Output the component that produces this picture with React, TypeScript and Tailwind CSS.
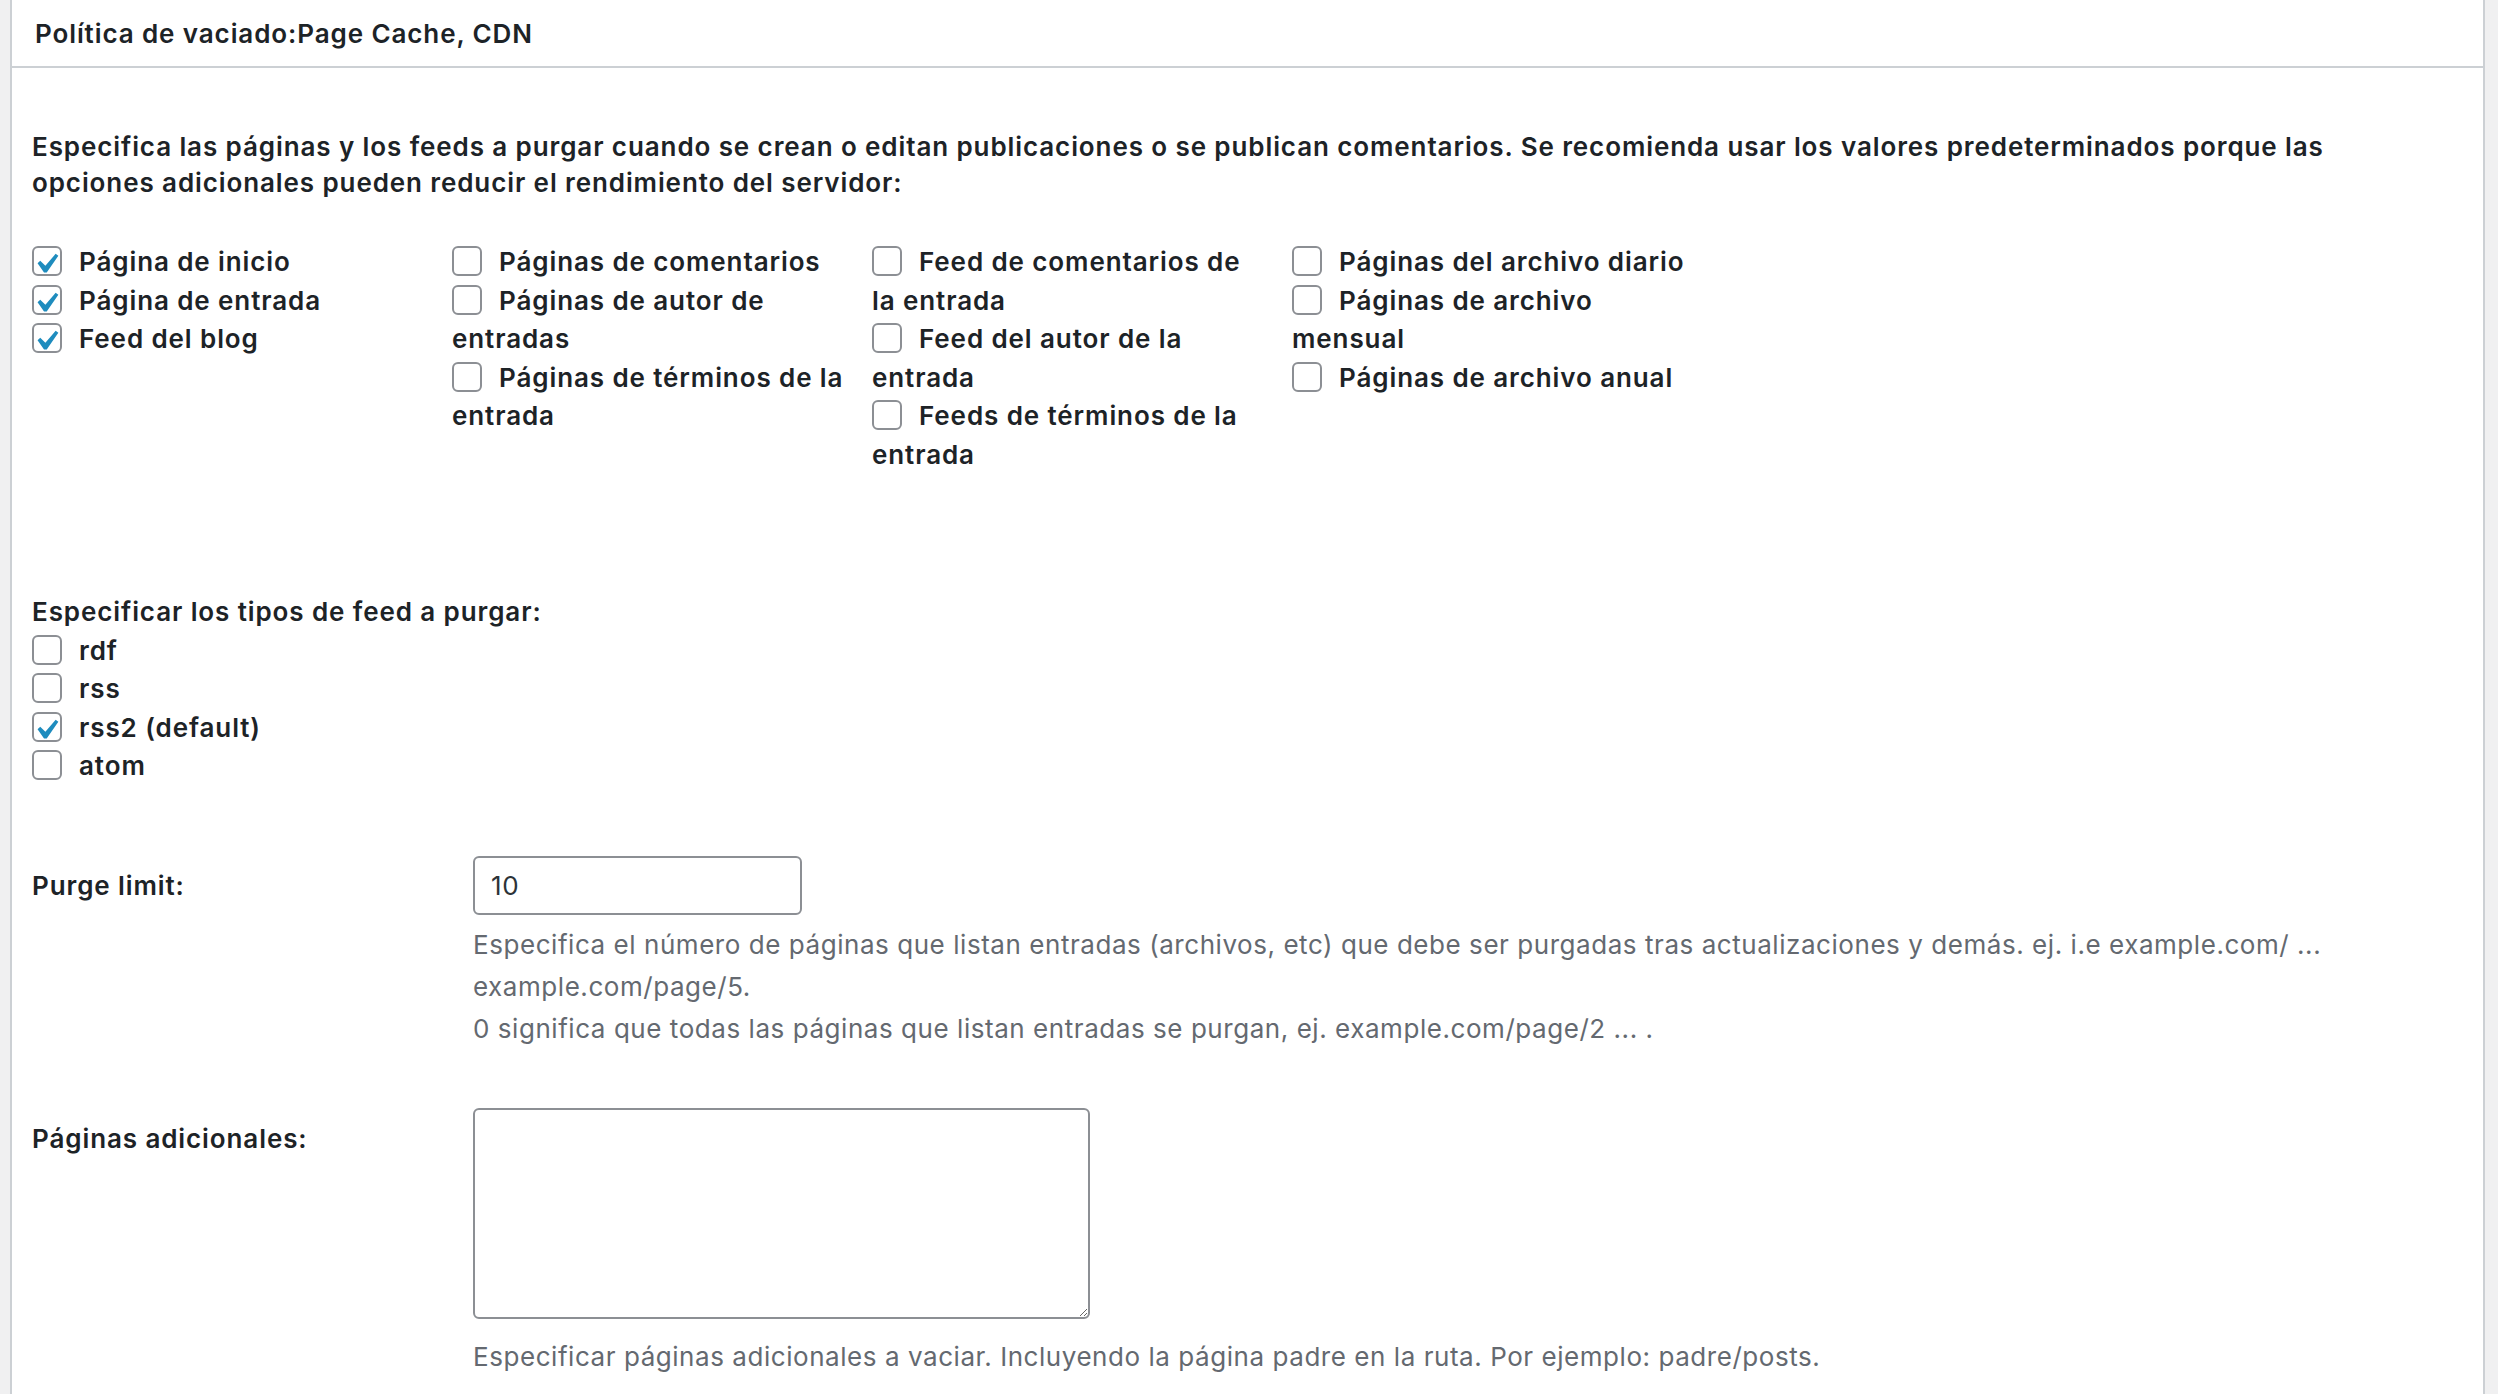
import React from "react";

const Check = ({ checked }: { checked?: boolean }) => (
  <span className="relative inline-block w-[30px] h-[30px] align-middle mr-[17px] mt-[-5px] border-2 border-[#8c8f94] rounded-[6px] bg-white">
    {checked && (
      <svg viewBox="0 0 20 20" className="absolute left-[-8px] top-[-4px] w-[40px] h-[40px]">
        <path d="M14.83 4.89l1.34.94-5.81 8.38H9.02L5.78 9.67l1.34-1.25 2.57 2.4z" fill="#1e8cbe" />
      </svg>
    )}
  </span>
);

const Item = ({ label, checked }: { label: string; checked?: boolean }) => (
  <div>
    <Check checked={checked} />
    {label}
  </div>
);

const columns: { label: string; checked?: boolean }[][] = [
  [
    { label: "Página de inicio", checked: true },
    { label: "Página de entrada", checked: true },
    { label: "Feed del blog", checked: true },
  ],
  [
    { label: "Páginas de comentarios" },
    { label: "Páginas de autor de entradas" },
    { label: "Páginas de términos de la entrada" },
  ],
  [
    { label: "Feed de comentarios de la entrada" },
    { label: "Feed del autor de la entrada" },
    { label: "Feeds de términos de la entrada" },
  ],
  [
    { label: "Páginas del archivo diario" },
    { label: "Páginas de archivo mensual" },
    { label: "Páginas de archivo anual" },
  ],
];

export default function App() {
  return (
    <div className="min-h-screen bg-[#f0f0f1] pl-[10px] pr-[13px] font-['Inter',sans-serif] text-[#1d2327] tracking-[0.9px]">
      <div className="bg-white border-x-2 border-[#ccd0d4] min-h-[1394px]">
        <div className="h-[68px] border-b-2 border-[#ccd0d4] pl-[23px] flex items-center text-[26px] font-semibold">
          Política de vaciado:Page Cache, CDN
        </div>
        <div className="pl-[20px] pr-[20px] text-[26px] font-semibold">
          <p className="mt-[61px] leading-[36px] max-w-[2370px]">
            Especifica las páginas y los feeds a purgar cuando se crean o editan publicaciones o se publican comentarios. Se recomienda usar los valores predeterminados porque las opciones adicionales pueden reducir el rendimiento del servidor:
          </p>
          <div className="mt-[42px] grid grid-cols-[420px_420px_420px_420px] leading-[38.5px]">
            {columns.map((col, i) => (
              <div key={i} className="pr-[25px]">
                {col.map((it) => (
                  <Item key={it.label} label={it.label} checked={it.checked} />
                ))}
              </div>
            ))}
          </div>
          <div className="mt-[119px] leading-[38.5px]">
            <div>Especificar los tipos de feed a purgar:</div>
            <Item label="rdf" />
            <Item label="rss" />
            <Item label="rss2 (default)" checked />
            <Item label="atom" />
          </div>
          <div className="mt-[70px] grid grid-cols-[441px_1fr]">
            <div className="pt-[11px] leading-[38px]">Purge limit:</div>
            <div className="font-normal tracking-[0.55px]">
              <input
                type="text"
                defaultValue="10"
                className="block w-[329px] h-[59px] border-2 border-[#8c8f94] rounded-[6px] px-[16px] text-[26px] text-[#2c3338] outline-none"
              />
              <div className="mt-[9px] leading-[42px] text-[#646970]">
                Especifica el número de páginas que listan entradas (archivos, etc) que debe ser purgadas tras actualizaciones y demás. ej. i.e example.com/ ... example.com/page/5.
                <br />0 significa que todas las páginas que listan entradas se purgan, ej. example.com/page/2 ... .
              </div>
            </div>
          </div>
          <div className="mt-[58px] grid grid-cols-[441px_1fr]">
            <div className="pt-[12px] leading-[38px]">Páginas adicionales:</div>
            <div className="font-normal tracking-[0.55px]">
              <textarea className="block w-[617px] h-[211px] border-2 border-[#8c8f94] rounded-[6px] outline-none" />
              <div className="mt-[17px] leading-[42px] text-[#646970]">
                Especificar páginas adicionales a vaciar. Incluyendo la página padre en la ruta. Por ejemplo: padre/posts.
              </div>
            </div>
          </div>
        </div>
      </div>
    </div>
  );
}
